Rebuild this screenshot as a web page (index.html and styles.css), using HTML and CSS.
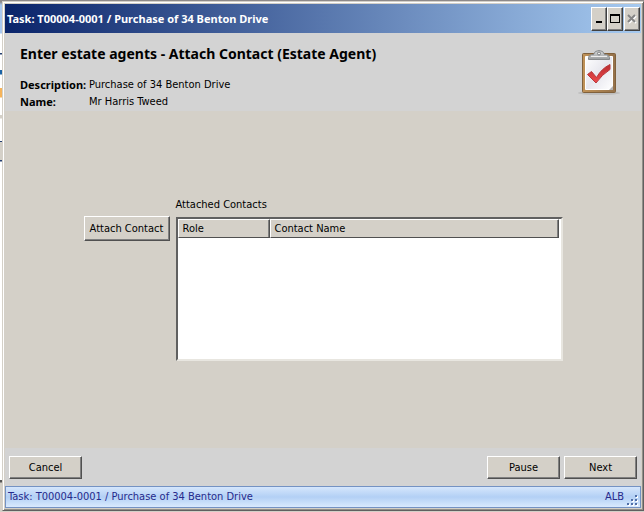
FILE: index.html
```html
<!DOCTYPE html>
<html lang="en">
<head>
<meta charset="utf-8">
<title>Task: T00004-0001 / Purchase of 34 Benton Drive</title>
<link rel="stylesheet" href="styles.css">
</head>
<body>
<div class="window">
  <header class="titlebar">
    <span class="titlebar-text">Task: T00004-0001 / Purchase of 34 Benton Drive</span>
    <div class="controls">
      <button class="control" aria-label="Minimize"><svg width="12" height="12" viewBox="0 0 12 12"><path d="M3 8h6v2H3z" fill="#000"/></svg></button>
      <button class="control" aria-label="Maximize"><svg width="12" height="12" viewBox="0 0 12 12"><path d="M1 1h10v9H1zM2 3v6h8V3z" fill="#000" fill-rule="evenodd"/></svg></button>
      <button class="control control-close" aria-label="Close" disabled><svg width="12" height="12" viewBox="0 0 12 12"><path d="M3 3l7 7M10 3l-7 7" stroke="#fff" stroke-width="2"/><path d="M2 2l7 7M9 2l-7 7" stroke="#858585" stroke-width="2"/></svg></button>
    </div>
  </header>
  <section class="summary">
    <div>
      <h1>Enter estate agents - Attach Contact (Estate Agent)</h1>
      <dl class="details">
        <dt>Description:</dt><dd>Purchase of 34 Benton Drive</dd>
        <dt>Name:</dt><dd>Mr Harris Tweed</dd>
      </dl>
    </div>
    <svg class="clipboard" width="44" height="48" viewBox="0 0 44 48" aria-hidden="true">
      <defs>
        <linearGradient id="wood" x2="1"><stop stop-color="#c09257"/><stop offset="1" stop-color="#94714a"/></linearGradient>
        <linearGradient id="paper" x2="1" y2="1"><stop stop-color="#fff"/><stop offset=".5" stop-color="#e7e7ee"/><stop offset="1" stop-color="#fff"/></linearGradient>
        <linearGradient id="metal" x2="0" y2="1"><stop stop-color="#d8dadb"/><stop offset="1" stop-color="#999d9f"/></linearGradient>
        <linearGradient id="tick" x2="0" y2="1"><stop stop-color="#b92c31"/><stop offset="1" stop-color="#ee4b4c"/></linearGradient>
      </defs>
      <ellipse cx="22" cy="44" rx="21" ry="2" fill="#aaa" opacity=".5"/>
      <rect x="5.500" y="4.500" width="33" height="39" rx="1" fill="url(#wood)" stroke="#80613c"/>
      <path d="M8.500 7.500h27v33h-27z" fill="url(#paper)" stroke="#fff"/>
      <path d="M32 41l4-4v4z" fill="#b2b2b4"/>
      <path d="M11.500 10.500V8.500q0-2 3-3h2q1-4 5.500-4t5.500 4h2q3 1 3 3v2z" fill="url(#metal)" stroke="#85898b"/>
      <path d="M14 7.500h16" stroke="#eee"/>
      <circle cx="22" cy="4.500" r="1.500" fill="#eee" stroke="#787c7e"/>
      <path d="M10.500 25.500l4-3 5 6q5-9 13.500-13v5q-8 5-14 13.500z" fill="url(#tick)" stroke="#b8383c"/>
    </svg>
  </section>
  <main class="work">
    <button class="button attach">Attach Contact</button>
    <div class="contacts">
      <div class="contacts-label" id="contacts-label">Attached Contacts</div>
      <div class="list">
        <table aria-labelledby="contacts-label">
          <thead><tr><th class="role">Role</th><th>Contact Name</th></tr></thead>
          <tbody></tbody>
        </table>
      </div>
    </div>
  </main>
  <footer class="actions">
    <button class="button">Cancel</button>
    <div class="next-actions"><button class="button">Pause</button><button class="button">Next</button></div>
  </footer>
  <div class="status">
    <span>Task: T00004-0001 / Purchase of 34 Benton Drive</span>
    <span class="user">ALB</span>
    <svg width="12" height="12" viewBox="0 0 12 12" aria-hidden="true"><path d="M9 1h2v2H9zM5 5h2v2H5zM9 5h2v2H9zM1 9h2v2H1zM5 9h2v2H5zM9 9h2v2H9z" fill="#fff"/><path d="M8 0h2v2H8zM4 4h2v2H4zM8 4h2v2H8zM0 8h2v2H0zM4 8h2v2H4zM8 8h2v2H8z" fill="#506fa8"/></svg>
  </div>
</div>
</body>
</html>
```
FILE: styles.css
```css
* { box-sizing: border-box; }
body {
  margin: 0;
  min-height: 100vh;
  display: flex;
  padding: 1px 0 1px 2px;
  background: linear-gradient(to bottom, #8d898a 0 2px, #a9c8ef 5px 33px, #fff 34px 53px, #243f70 53px 54px, #fff 55px 70px, #1b63a5 70px 74px, #fff 75px 88px, #f6b45a 88px 97px, #fff 98px 115px, #d4d0c8 115px 118px, #fff 119px 141px, #243f70 141px 142px, #d4d0c8 142px 160px, #243f70 160px 161px, #fff 162px 480px, #555 480px 482px, #d4d0c8 483px);
  font: 11px/16px "DejaVu Sans Condensed", "DejaVu Sans", sans-serif;
  color: #000;
}
.window {
  flex: 1;
  display: flex;
  flex-direction: column;
  padding: 2px;
  background: #d4d0c8;
  border: 1px solid;
  border-color: #d4d0c8 #606060 #606060 #d4d0c8;
  box-shadow: inset 1px 1px #fff, inset -1px -1px #929089;
}
.titlebar, h1, dt { font-family: "Noto Sans", sans-serif; }
.titlebar {
  display: flex;
  align-items: center;
  justify-content: space-between;
  height: 29px;
  padding: 0 1px 0 2px;
  background: linear-gradient(to right, #0a246a, #a6caf0);
  color: #fff;
  font-weight: bold;
}
.controls { display: flex; }
.control {
  width: 16px;
  height: 24px;
  padding: 0;
  display: flex;
  align-items: center;
  justify-content: center;
  background: #d4d0c8;
  border: 1px solid;
  border-color: #fff #404040 #404040 #fff;
  box-shadow: inset -1px -1px #808080;
}
.control-close { margin-left: 1px; }
.summary {
  display: flex;
  justify-content: space-between;
  height: 78px;
  padding: 12px 20px 0 15px;
  background: #d3d3d3;
}
h1 { margin: 0 0 14px; font-size: 14px; line-height: 18px; }
.details {
  display: grid;
  grid-template-columns: 69px auto;
  row-gap: 1px;
  margin: 0;
}
dt { font-weight: bold; white-space: nowrap; }
dd { margin: 0; }
.clipboard { margin-top: 4px; }
.work {
  flex: 1;
  display: flex;
  justify-content: center;
  gap: 6px;
  padding: 86px 16px 0;
}
.button {
  width: 73px;
  height: 23px;
  padding: 0;
  background: #d4d0c8;
  border: 1px solid;
  border-color: #fff #505050 #505050 #fff;
  box-shadow: inset -1px -1px #808080;
  font: inherit;
  color: #000;
}
.attach { width: 86px; height: 25px; margin-top: 19px; }
.contacts { width: 387px; }
.contacts-label { margin-bottom: 4px; }
.list {
  height: 144px;
  padding-right: 2px;
  background: #fff;
  border: 2px solid;
  border-color: #606060 #e8e6e0 #e8e6e0 #606060;
}
table { width: 100%; border-collapse: separate; border-spacing: 0; table-layout: fixed; }
th {
  height: 19px;
  padding: 0 4px;
  background: #d4d0c8;
  border: 1px solid;
  border-color: #fff #505050 #505050 #fff;
  box-shadow: inset -1px 0 #808080;
  font-weight: normal;
  text-align: left;
}
.role { width: 92px; }
.actions {
  display: flex;
  justify-content: space-between;
  height: 38px;
  padding: 8px 4px 0;
  background: #d3d3d3;
}
.next-actions { display: flex; gap: 4px; }
.status {
  display: flex;
  align-items: center;
  height: 22px;
  padding: 0 1px 0 2px;
  border: 1px solid #7492c3;
  background: linear-gradient(#d5e6fc, #b3d0f5 50%, #d9eafe);
  color: #262a8c;
}
.user { margin-left: auto; margin-right: 3px; }
.status svg { align-self: flex-end; }
```
